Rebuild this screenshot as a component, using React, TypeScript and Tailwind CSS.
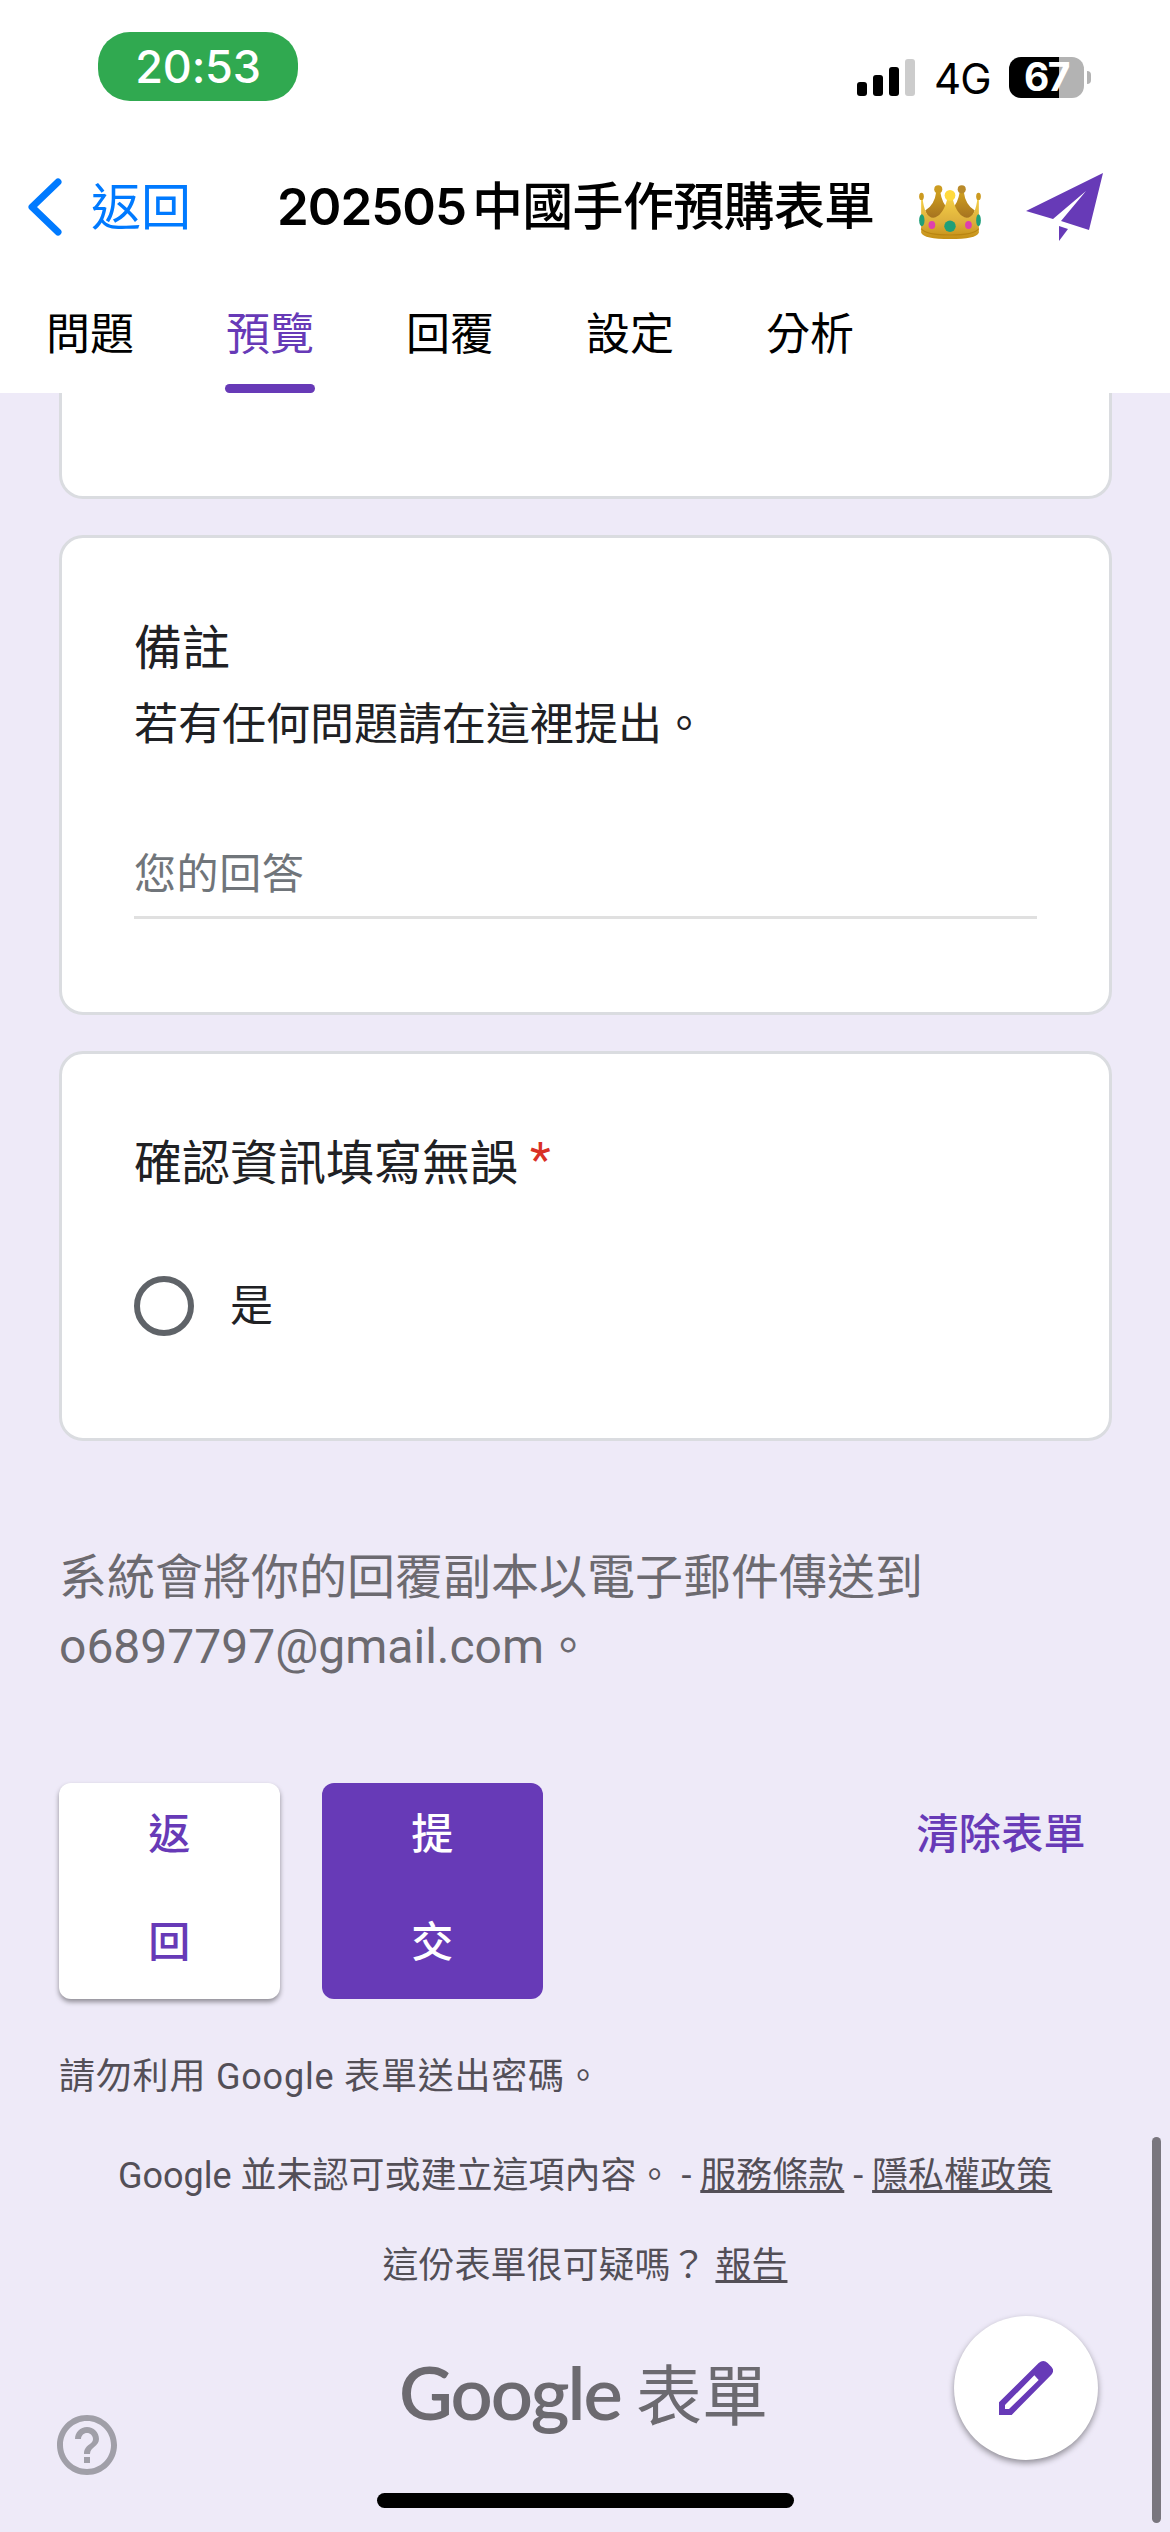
import React from "react";
import { MdHelpOutline } from "react-icons/md";

type CardProps = {
  className?: string;
  children?: React.ReactNode;
};

const tabs = ["問題", "預覽", "回覆", "設定", "分析"];

function StatusBar() {
  return (
    <div className="flex h-[141px] items-start justify-between pl-[98px] pr-[79px]">
      <div className="mt-8 flex h-[69px] w-[200px] items-center justify-center rounded-[32px] bg-[#30a950] text-[45px] font-medium tracking-[-0.2px] text-white">
        20:53
      </div>
      <div className="mt-[57px] flex h-[41px] items-center">
        <div className="flex h-[37px] items-end gap-[6px]">
          <span className="h-[14px] w-[10px] rounded-[3px] bg-black" />
          <span className="h-[21px] w-[10px] rounded-[3px] bg-black" />
          <span className="h-[29px] w-[10px] rounded-[3px] bg-black" />
          <span className="h-[37px] w-[10px] rounded-[3px] bg-[#cccccc]" />
        </div>
        <span className="ml-[19px] w-[75px] pt-[3px] text-[42px] leading-none tracking-[-1px]">4G</span>
        <div className="flex h-[41px] w-[75px] items-center justify-center rounded-[12px] bg-[linear-gradient(90deg,#000_67%,#b3b3b3_67%)] text-[39px] font-bold tracking-[-1.5px] text-white">
          67
        </div>
        <span className="ml-[3px] h-[13px] w-[4px] rounded-r-full bg-[#b3b3b3]" />
      </div>
    </div>
  );
}

function Crown() {
  return (
    <svg className="mt-[10px] h-[54px] w-[62px]" viewBox="0 0 184 161">
      <defs>
        <linearGradient id="gold" x1="0" y1="0" x2="0" y2="1">
          <stop offset="0" stopColor="#f5cf45" />
          <stop offset="0.6" stopColor="#dcae3c" />
          <stop offset="1" stopColor="#c48f14" />
        </linearGradient>
        <linearGradient id="back" x1="0" y1="0" x2="0" y2="1">
          <stop offset="0" stopColor="#cf9f1e" />
          <stop offset="1" stopColor="#a37020" />
        </linearGradient>
      </defs>
      <path d="M51 20 Q46 60 18 76 L30 104 H154 L166 76 Q138 60 133 20 H121 Q116 54 98 70 H86 Q68 54 63 20Z" fill="url(#back)" />
      <circle cx="57" cy="13" r="12" fill="#cc9c20" />
      <circle cx="127" cy="13" r="12" fill="#b98a2a" />
      <path
        d="M6 38 H10 Q16 96 42 98 Q70 94 84 42 H100 Q114 94 142 98 Q168 96 174 38 H178 V142 Q170 161 92 161 Q14 161 6 142Z"
        fill="url(#gold)"
      />
      <ellipse cx="7" cy="34" rx="7" ry="11" fill="#cc9a20" />
      <ellipse cx="177" cy="34" rx="7" ry="11" fill="#cc9a20" />
      <circle cx="92" cy="31" r="16" fill="#ffda3e" />
      <path d="M6 130 Q20 149 92 149 Q164 149 178 130" fill="none" stroke="#b98512" strokeWidth="3" />
      <circle cx="92" cy="123" r="17" fill="#1f9f78" />
      <ellipse cx="38" cy="119" rx="10" ry="12" fill="#df3fae" />
      <ellipse cx="147" cy="119" rx="10" ry="12" fill="#df3fae" />
      <ellipse cx="8" cy="105" rx="8" ry="18" fill="#1f9f78" />
      <ellipse cx="177" cy="105" rx="7" ry="18" fill="#1f9f78" />
    </svg>
  );
}

function NavBar() {
  return (
    <div className="flex h-[132px] items-center pl-7">
      <svg className="h-[58px] w-[34px]" viewBox="0 0 34 58" fill="none">
        <path d="M30 4 L4 29 L30 54" stroke="#007aff" strokeWidth="7" strokeLinecap="round" strokeLinejoin="round" />
      </svg>
      <span className="ml-[29px] w-[186px] text-[50px] text-[#007aff]">返回</span>
      <h1 className="flex w-[642px] items-baseline whitespace-nowrap text-[51px] font-semibold">
        <span className="w-[195px] tracking-[-1px]">202505</span>
        <span className="font-medium tracking-[-0.7px]">中國手作預購表單</span>
      </h1>
      <Crown />
      <svg className="ml-[45px] h-[68px] w-[78px]" viewBox="0 0 78 68" fill="#673ab7">
        <path d="M77 0 L0 38 L27 46 L60 18 L35 48 L63 57Z" />
        <path d="M33 53 L42 56 L33 68Z" />
      </svg>
    </div>
  );
}

function Tabs() {
  return (
    <div className="flex h-[120px] gap-[90px] pl-[45px]">
      {tabs.map((tab) => (
        <div key={tab} className="flex h-full w-[90px] flex-col justify-between">
          <span className={tab === "預覽" ? "mt-[29px] text-center text-[44px] leading-[64px] text-[#673ab7]" : "mt-[29px] text-center text-[44px] leading-[64px]"}>
            {tab}
          </span>
          {tab === "預覽" && <span className="h-[9px] rounded-full bg-[#673ab7]" />}
        </div>
      ))}
    </div>
  );
}

function Card({ className = "", children }: CardProps) {
  return (
    <section className={`ml-[59px] w-[1053px] border-[3px] border-[#dadce0] bg-white px-[72px] text-[#202124] ${className}`}>
      {children}
    </section>
  );
}

function PencilIcon() {
  return (
    <svg className="size-[54px]" viewBox="0 0 162 162" fill="currentColor" fillRule="evenodd">
      <path d="M0 162 V124 L119 6 Q133 -6 146 6 L157 17 Q168 29 157 41 L38 162Z M18 132 V144 H30 L119 57 L106 43Z" />
    </svg>
  );
}

export default function App() {
  return (
    <div className="relative flex h-[2532px] w-[1170px] flex-col overflow-hidden bg-[#eeeaf8] font-[Roboto,'Noto_Sans_CJK_TC',sans-serif]">
      <header className="h-[393px] shrink-0 bg-white font-[Inter,'Noto_Sans_CJK_TC',sans-serif] text-black">
        <StatusBar />
        <NavBar />
        <Tabs />
      </header>

      <main className="flex flex-col">
        <Card className="h-[106px] rounded-b-[24px] border-t-0" />

        <Card className="mt-9 h-[480px] rounded-[24px] pt-[75px]">
          <h2 className="text-[48px] leading-[72px]">備註</h2>
          <p className="mt-1 text-[44px] leading-[72px]">若有任何問題請在這裡提出。</p>
          <input
            className="mt-[70px] block h-[88px] w-[903px] border-b-[3px] border-[#e0e0e0] pt-[2px] text-[42px] tracking-[0.6px] outline-none placeholder:text-[#70757a]"
            placeholder="您的回答"
          />
        </Card>

        <Card className="mt-9 h-[390px] rounded-[24px] pt-[74px]">
          <h2 className="text-[48px] leading-[72px]">
            確認資訊填寫無誤 <span className="inline-block -translate-y-1 text-[#d93025]">*</span>
          </h2>
          <label className="mt-[76px] flex h-[60px] items-center gap-9">
            <span className="size-[60px] rounded-full border-[6px] border-[#5f6368]" />
            <span className="text-[43px]">是</span>
          </label>
        </Card>

        <p className="ml-[59px] mt-[102px] text-[48px] leading-[69px] text-[#6c6a70]">
          系統會將你的回覆副本以電子郵件傳送到
          <br />
          o6897797@gmail.com。
        </p>

        <div className="mt-[102px] flex h-[216px] pl-[59px] text-[42px] font-medium leading-[108px] tracking-[0.4px]">
          <button className="flex w-[221px] flex-col items-center rounded-[12px] bg-white text-[#673ab7] shadow-[0_3px_5px_rgba(0,0,0,0.4)]">
            <span className="-mt-[2px]">返</span>
            <span>回</span>
          </button>
          <button className="ml-[42px] flex w-[221px] flex-col items-center rounded-[12px] bg-[#673ab7] text-white">
            <span className="-mt-[2px]">提</span>
            <span>交</span>
          </button>
          <button className="-mt-[2px] ml-auto mr-[84px] h-[108px] text-[#673ab7]">清除表單</button>
        </div>

        <footer className="text-[36px] leading-[54px] text-[#534f57]">
          <p className="ml-[59px] mt-[51px] tracking-[0.8px]">請勿利用 Google 表單送出密碼。</p>
          <p className="mt-[45px] text-center">
            Google 並未認可或建立這項內容。 - <a className="underline">服務條款</a> - <a className="underline">隱私權政策</a>
          </p>
          <p className="mt-9 text-center">
            這份表單很可疑嗎？ <a className="underline">報告</a>
          </p>
          <div className="mt-[54px] flex items-baseline pl-[399px] text-[#6c6a70]">
            <span className="w-[237px] font-[Lato] text-[74px] font-semibold leading-[90px] tracking-[-2px]">Google</span>
            <span className="text-[66px]">表單</span>
          </div>
        </footer>
      </main>

      <MdHelpOutline className="absolute left-[51px] top-[2409px] size-[72px] text-[#a09fa8]" />
      <button className="absolute left-[954px] top-[2316px] flex size-[144px] items-center justify-center rounded-full bg-white text-[#673ab7] shadow-[0_3px_6px_rgba(0,0,0,0.4)]">
        <PencilIcon />
      </button>
      <div className="absolute left-[1152px] top-[2137px] h-[386px] w-[9px] rounded-full bg-[#79767e]" />
      <div className="absolute left-[377px] top-[2493px] h-[15px] w-[417px] rounded-full bg-black" />
    </div>
  );
}
